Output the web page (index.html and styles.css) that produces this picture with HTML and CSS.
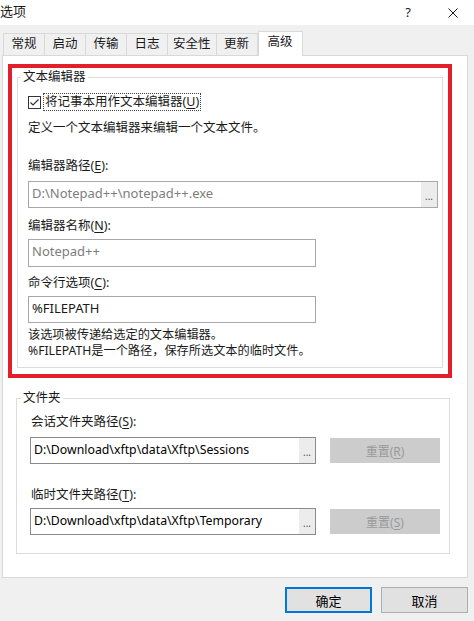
FILE: index.html
```html
<!DOCTYPE html>
<html lang="zh-CN">
<head>
  <meta charset="UTF-8">
  <meta name="viewport" content="width=device-width, initial-scale=1.0">
  <title>选项</title>
  <link rel="stylesheet" href="styles.css">
</head>
<body>
  <div class="titlebar">
    <span class="title">选项</span>
    <span class="help">?</span>
    <span class="close">
      <svg width="10" height="10" viewBox="0 0 10 10"><path d="M0.5 0.5L9.5 9.5M9.5 0.5L0.5 9.5" stroke="#1a1a1a" stroke-width="1" fill="none"/></svg>
    </span>
  </div>

  <div class="tabs">
    <div class="tab">常规</div>
    <div class="tab">启动</div>
    <div class="tab">传输</div>
    <div class="tab">日志</div>
    <div class="tab tab-wide">安全性</div>
    <div class="tab">更新</div>
    <div class="tab active">高级</div>
  </div>

  <div class="panel">
    <div class="highlight">
      <fieldset class="group group-editor">
        <legend>文本编辑器</legend>
        <div class="group-body">
          <label class="check-row">
            <span class="checkbox">
              <svg width="13" height="13" viewBox="0 0 13 13"><rect x="0.5" y="0.5" width="12" height="12" fill="#fff" stroke="#333"/><path d="M2.5 6.5L5 9L10.5 3.5" stroke="#333" stroke-width="1.2" fill="none"/></svg>
            </span>
            <span class="focus">将记事本用作文本编辑器(<u>U</u>)</span>
          </label>
          <p class="desc">定义一个文本编辑器来编辑一个文本文件。</p>

          <div class="label label-path">编辑器路径(<u>E</u>):</div>
          <div class="field field-path muted">
            <span class="value">D:\Notepad++\notepad++.exe</span>
            <span class="browse">...</span>
          </div>

          <div class="label label-name">编辑器名称(<u>N</u>):</div>
          <div class="field field-name muted">
            <span class="value">Notepad++</span>
          </div>

          <div class="label label-cmd">命令行选项(<u>C</u>):</div>
          <div class="field field-cmd">
            <span class="value">%FILEPATH</span>
          </div>

          <p class="note">该选项被传递给选定的文本编辑器。<br>%FILEPATH是一个路径，保存所选文本的临时文件。</p>
        </div>
      </fieldset>
    </div>

    <fieldset class="group group-folder">
      <legend>文件夹</legend>
      <div class="group-body">
        <div class="label label-session">会话文件夹路径(<u>S</u>):</div>
        <div class="folder-row">
          <div class="field field-folder">
            <span class="value">D:\Download\xftp\data\Xftp\Sessions</span>
            <span class="browse">...</span>
          </div>
          <button class="btn-reset" disabled>重置(<u>R</u>)</button>
        </div>

        <div class="label label-temp">临时文件夹路径(<u>T</u>):</div>
        <div class="folder-row row-temp">
          <div class="field field-folder">
            <span class="value">D:\Download\xftp\data\Xftp\Temporary</span>
            <span class="browse">...</span>
          </div>
          <button class="btn-reset" disabled>重置(<u>S</u>)</button>
        </div>
      </div>
    </fieldset>
  </div>

  <div class="footer">
    <button class="btn btn-default">确定</button>
    <button class="btn">取消</button>
  </div>
</body>
</html>
```

FILE: styles.css
```css
body {
  margin: 0;
  width: 474px;
  height: 621px;
  overflow: hidden;
  background: #f0f0f0;
  color: #1a1a1a;
  font-family: "Noto Sans", "Noto Sans CJK SC", sans-serif;
  font-size: 12px;
  line-height: 16px;
}

u {
  text-decoration: underline;
  text-underline-offset: 2px;
}

.titlebar {
  height: 25px;
  background: #fff;
  display: flex;
  align-items: center;
}

.title {
  font-size: 13px;
  margin-top: -3px;
}

.help {
  margin-left: auto;
  width: 10px;
  text-align: center;
  font-size: 13px;
  margin-top: -2px;
}

.close {
  display: flex;
  margin-left: 35px;
  margin-right: 16px;
}

.tabs {
  height: 30px;
  display: flex;
  align-items: flex-end;
  padding-left: 3px;
}

.tab {
  height: 21px;
  line-height: 20px;
  padding: 0 7.5px;
  border: 1px solid #d9d9d9;
  border-bottom: none;
  margin-right: -1px;
  background: #f0f0f0;
  font-size: 12.5px;
}

.tab.tab-wide {
  padding: 0 5px;
}

.tab.active {
  height: 24px;
  line-height: 20px;
  padding: 0 9px;
  background: #fff;
  margin-bottom: -1px;
  margin-left: 1px;
  position: relative;
  z-index: 1;
}

.panel {
  box-sizing: border-box;
  width: 466px;
  height: 523px;
  margin-left: 2px;
  background: #fff;
  border: 1px solid #d9d9d9;
  display: flex;
  flex-direction: column;
}

.highlight {
  margin: 8px 15px 0 5px;
  border: 4px solid #e3202a;
}

.group {
  margin: 0;
  padding: 0 0 0 3px;
  border: 1px solid #dcdcdc;
  min-width: 0;
}

.group legend {
  padding: 0 2px;
  font-size: 12.5px;
}

.group-editor {
  margin: 1px 5px 6px 5px;
  padding-bottom: 8px;
}

.group-editor .group-body {
  padding-left: 7px;
}

.check-row {
  display: flex;
  align-items: center;
  height: 18px;
  margin-top: 8px;
}

.checkbox {
  display: flex;
  margin-right: 2px;
}

.focus {
  border: 1px dotted #444;
  padding: 0 1px;
  line-height: 16px;
  font-size: 12.5px;
}

.desc,
.note {
  margin: 0;
  font-size: 12.5px;
}

.desc {
  margin-top: 9px;
}

.note {
  margin-top: 4px;
  font-size: 12.2px;
}

.label {
  font-size: 12.5px;
}

.label-path { margin-top: 22px; }
.label-name { margin-top: 10px; }
.label-cmd { margin-top: 8px; }

.field {
  box-sizing: border-box;
  display: flex;
  align-items: stretch;
  height: 27px;
  border: 1px solid #a8a8a8;
  background: #fff;
  font-size: 13px;
}

.field .value {
  flex: 1;
  padding-left: 3px;
  line-height: 23px;
  white-space: nowrap;
  overflow: hidden;
}

.field.muted {
  color: #7d7d7d;
}

.browse {
  width: 16px;
  background: #ececec;
  color: #555;
  font-size: 10px;
  line-height: 10px;
  text-align: center;
  display: flex;
  align-items: flex-end;
  justify-content: center;
  padding-bottom: 6px;
  box-sizing: border-box;
}

.field-path {
  width: 410px;
  margin-top: 7px;
}

.field-name {
  width: 288px;
  height: 28px;
  margin-top: 5px;
}

.field-cmd {
  width: 288px;
  margin-top: 5px;
}

.group-folder {
  margin: 12px 17px 0 13px;
  padding: 0 0 18px 4px;
}

.group-folder .group-body {
  padding-left: 9px;
}

.label-session {
  margin-top: 8px;
  padding-left: 1px;
}

.label-temp {
  margin-top: 23px;
  padding-left: 1px;
}

.folder-row {
  display: flex;
  align-items: center;
  gap: 14px;
  margin-top: 7px;
}

.folder-row.row-temp {
  margin-top: 5px;
}

.field-folder {
  width: 286px;
  border-color: #8a8a8a;
  color: #000;
  font-size: 12.3px;
}

.btn-reset {
  width: 110px;
  height: 25px;
  border: none;
  background: #cccccc;
  color: #9a9a9a;
  font-family: inherit;
  font-size: 12px;
  padding: 0;
}

.footer {
  display: flex;
  justify-content: flex-end;
  gap: 9px;
  padding: 9px 6px 0 0;
}

.btn {
  box-sizing: border-box;
  width: 87px;
  height: 26px;
  border: 1px solid #adadad;
  background: #e1e1e1;
  color: #000;
  font-family: inherit;
  font-size: 13px;
  padding: 0;
}

.btn-default {
  border: 2px solid #0078d7;
}
```
